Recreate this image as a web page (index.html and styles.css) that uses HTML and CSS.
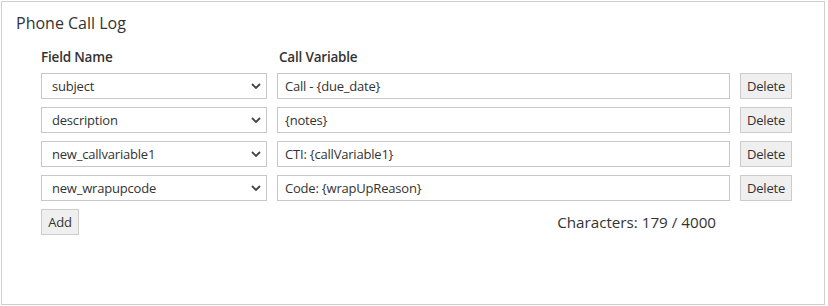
FILE: index.html
```html
<!DOCTYPE html>
<html>
<head>
<meta charset="utf-8">
<link rel="stylesheet" href="styles.css">
</head>
<body>
<div class="panel">
  <div class="title">Phone Call Log</div>
  <div class="grid">
    <div class="head">Field Name</div>
    <div class="head head-var">Call Variable</div>
    <div></div>

    <div class="select"><span>subject</span><svg class="chev" width="10" height="6" viewBox="0 0 10 6"><path d="M1 1 L5 5 L9 1" fill="none" stroke="#444" stroke-width="1.8"/></svg></div>
    <div class="input">Call - {due_date}</div>
    <div class="btn">Delete</div>

    <div class="select"><span>description</span><svg class="chev" width="10" height="6" viewBox="0 0 10 6"><path d="M1 1 L5 5 L9 1" fill="none" stroke="#444" stroke-width="1.8"/></svg></div>
    <div class="input">{notes}</div>
    <div class="btn">Delete</div>

    <div class="select"><span>new_callvariable1</span><svg class="chev" width="10" height="6" viewBox="0 0 10 6"><path d="M1 1 L5 5 L9 1" fill="none" stroke="#444" stroke-width="1.8"/></svg></div>
    <div class="input">CTI: {callVariable1}</div>
    <div class="btn">Delete</div>

    <div class="select"><span>new_wrapupcode</span><svg class="chev" width="10" height="6" viewBox="0 0 10 6"><path d="M1 1 L5 5 L9 1" fill="none" stroke="#444" stroke-width="1.8"/></svg></div>
    <div class="input">Code: {wrapUpReason}</div>
    <div class="btn">Delete</div>
  </div>
  <div class="footer">
    <div class="btn add">Add</div>
    <div class="count">Characters: 179 / 4000</div>
  </div>
</div>
</body>
</html>
```
FILE: styles.css
```css
html, body {
  margin: 0;
  padding: 0;
  background: #fff;
}
body {
  font-family: "Open Sans", "Noto Sans", sans-serif;
  color: #333;
}
.panel {
  margin: 1px;
  width: 822px;
  height: 302px;
  border: 1px solid #cfcfcf;
  box-sizing: content-box;
}
.title {
  font-size: 16px;
  line-height: 20px;
  padding: 11px 0 0 14px;
  color: #333;
}
.grid {
  display: grid;
  grid-template-columns: 226px 453px 52px;
  column-gap: 10px;
  row-gap: 8px;
  margin: 16px 0 0 39px;
}
.head {
  font-size: 13.5px;
  font-weight: 600;
  line-height: 17px;
  margin-bottom: -1px;
  letter-spacing: -0.2px;
}
.head-var {
  padding-left: 2px;
}
.select, .input {
  height: 26px;
  box-sizing: border-box;
  border: 1px solid #c8c8c8;
  font-size: 13px;
  letter-spacing: -0.2px;
  display: flex;
  align-items: center;
  background: #fff;
}
.select {
  padding: 0 0 0 10px;
  justify-content: space-between;
}
.chev {
  margin-right: 5px;
}
.input {
  padding-left: 7px;
}
.btn {
  height: 26px;
  box-sizing: border-box;
  border: 1px solid #cccccc;
  background: #efefef;
  font-size: 13px;
  letter-spacing: -0.2px;
  display: flex;
  align-items: center;
  justify-content: center;
}
.footer {
  display: flex;
  align-items: center;
  justify-content: space-between;
  margin: 8px 0 0 39px;
  width: 675px;
}
.add {
  width: 38px;
}
.count {
  font-size: 15.2px;
  color: #333;
}
```
